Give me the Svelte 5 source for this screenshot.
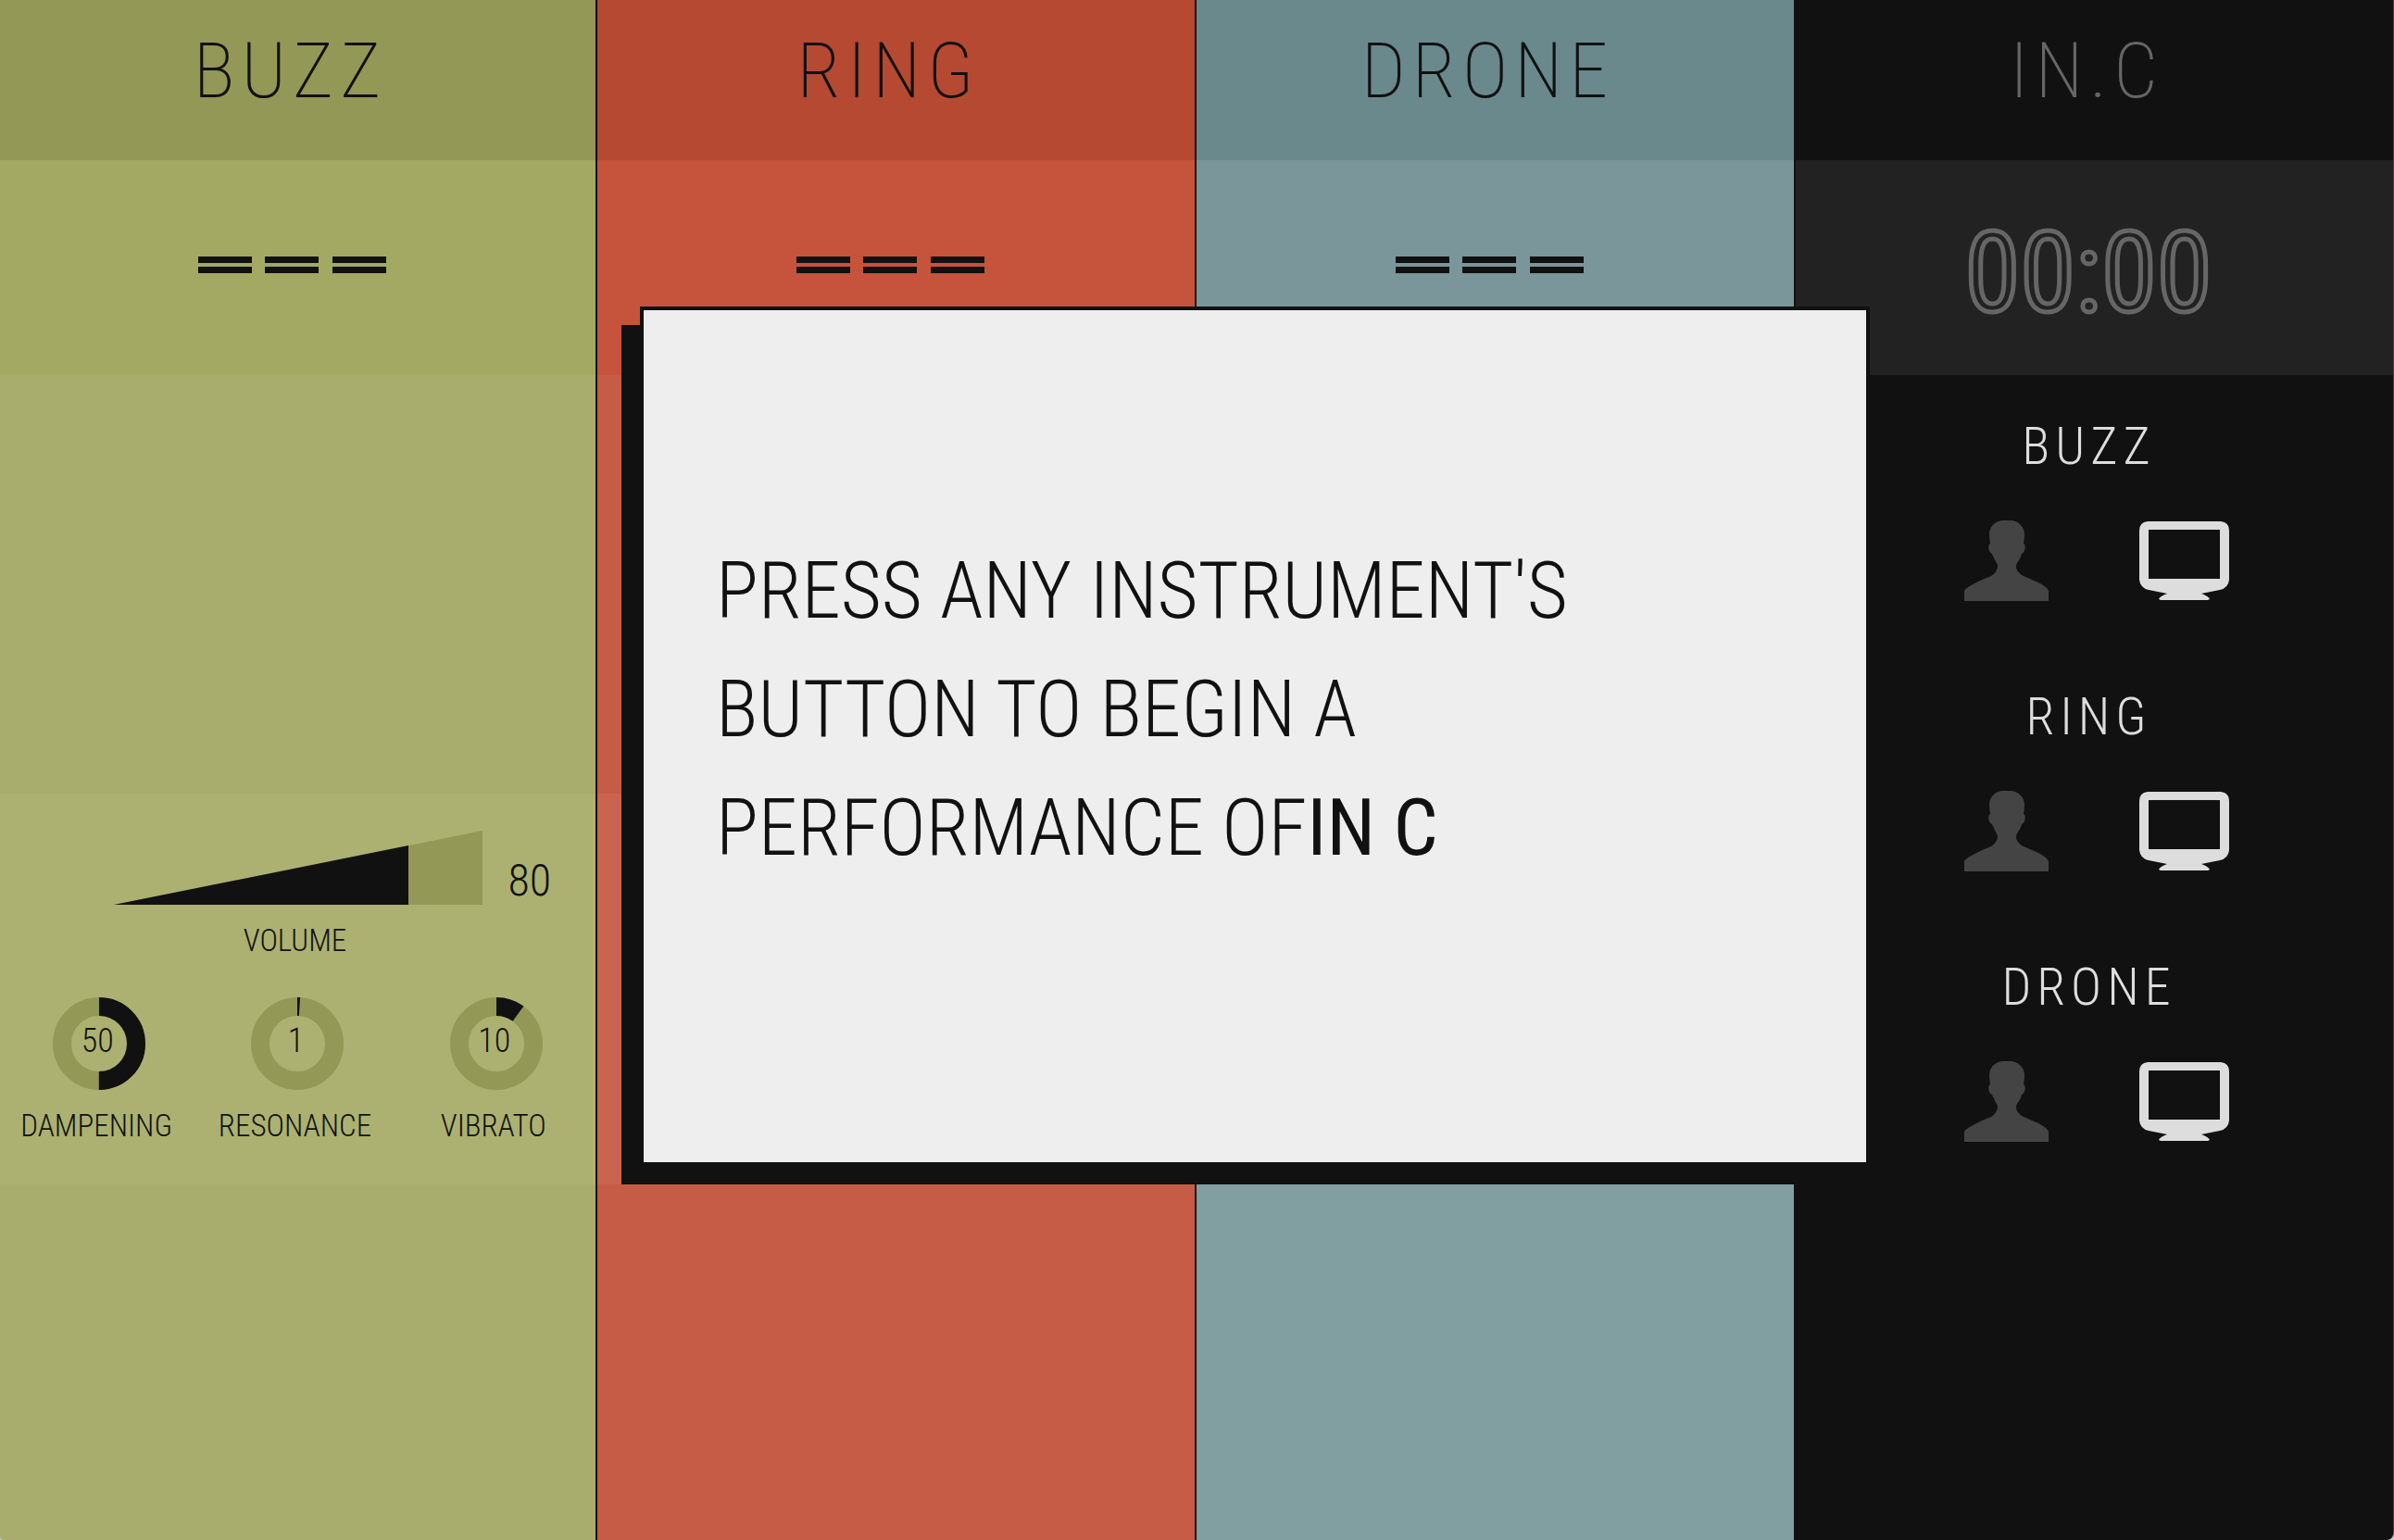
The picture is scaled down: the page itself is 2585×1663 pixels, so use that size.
<script>
  const instruments = [
    { name: 'BUZZ', tone: 'green', open: true },
    { name: 'RING', tone: 'red', open: false },
    { name: 'DRONE', tone: 'teal', open: false }
  ];
  const dials = [
    { label: 'DAMPENING', value: 50 },
    { label: 'RESONANCE', value: 1 },
    { label: 'VIBRATO', value: 10 }
  ];
  const volume = 80;
  const ring = 2 * Math.PI * 40;
</script>

<main class="board">
  {#each instruments as item}
    <section class="column {item.tone}">
      <header class="head"><h1>{item.name}</h1></header>
      <div class="band">
        <svg class="pattern" viewBox="0 0 203 18" role="img" aria-label="Pattern not started">
          <path d="M0 0h58v7H0zM72 0h58v7H72zM145 0h58v7h-58zM0 11h58v7H0zM72 11h58v7H72zM145 11h58v7h-58z" />
        </svg>
      </div>
      <div class="stage"></div>
      <div class="controls">
        {#if item.open}
          <div class="volume">
            <div class="wedge">
              <svg viewBox="0 0 398 80" aria-hidden="true">
                <path class="track" d="M0 80L398 0V80Z" />
                <path d="M0 80L318 16V80Z" />
              </svg>
              <input id="{item.name}-volume" type="range" min="0" max="100" value={volume} />
            </div>
            <output class="level" for="{item.name}-volume">{volume}</output>
          </div>
          <label class="caption" for="{item.name}-volume">VOLUME</label>
          <div class="dials">
            {#each dials as dial}
              <label class="dial">
                <span class="knob">
                  <svg viewBox="0 0 100 100" aria-hidden="true">
                    <circle class="groove" cx="50" cy="50" r="40" />
                    <circle class="amount" cx="50" cy="50" r="40" stroke-dasharray="{ring * dial.value / 100} {ring}" />
                  </svg>
                  <span class="number">{dial.value}</span>
                  <input type="range" min="0" max="100" value={dial.value} />
                </span>
                <span class="caption">{dial.label}</span>
              </label>
            {/each}
          </div>
        {/if}
      </div>
    </section>
  {/each}

  <section class="column dark">
    <header class="head"><h1>IN.C</h1></header>
    <div class="band"><time class="clock">00:00</time></div>
    {#each instruments as item}
      <div class="player">
        <h2>{item.name}</h2>
        <div class="modes">
          <button class="person" aria-label="{item.name} played by a person">
            <svg viewBox="0 0 91 87">
              <path d="M0 87V76C2 72 16 65 29 60C34 57 36 52 36 49C36 46 33 44 32 40Q30 37 30 36C26 35 25 26 28 25Q27 19 27 14C28 5 35 0 42 0H50C57 0 65 6 65 15Q65 20 64 25C67 26 66 35 62 36Q61 40 59 43C57 46 56 47 56 50C56 54 60 58 64 60C75 65 88 69 91 76V87Z" />
            </svg>
          </button>
          <button class="machine" aria-label="{item.name} played by the computer">
            <svg viewBox="0 0 97 87">
              <path fill-rule="evenodd" d="M9 1H88Q97 2 97 11V64Q96 73 87 75L67 79Q75 82 76 85L74 86H23L21 85Q22 82 30 79L10 75Q1 73 0 64V11Q0 2 9 1ZM10 10V63H87V10Z" />
            </svg>
          </button>
        </div>
      </div>
    {/each}
  </section>
</main>

<div class="notice" role="dialog" aria-label="Start a performance">
  <p>PRESS ANY INSTRUMENT'S<br />BUTTON TO BEGIN A<br />PERFORMANCE OF<b>IN C</b></p>
</div>

<style>
  :global(body) {
    background: #ccc;
    font-family: 'Roboto Condensed', 'Liberation Sans Narrow', Roboto, sans-serif;
    font-weight: 300;
  }
  .board {
    display: grid;
    grid-template-columns: 645fr 647fr 647fr 646fr;
    min-height: 100vh;
    color: #111;
    fill: #111;
  }
  h1, h2, p {
    margin: 0;
    font-weight: 300;
  }
  .column {
    display: flex;
    flex-direction: column;
    box-sizing: border-box;
    min-width: 0;
    border-right: 2px solid #111;
    background: var(--main);
  }
  .green { --head: #939857; --band: #a3a963; --main: #a8ad6d; --panel: #acb172; border-bottom-left-radius: 4px; }
  .red { --head: #b54932; --band: #c6533c; --main: #c65c45; --panel: #cb644e; }
  .teal { --head: #6a898c; --band: #7a969a; --main: #819ea0; --panel: #88a4a6; }
  .dark {
    --head: #111;
    --band: #222;
    --main: #111;
    color: #666;
    border-right: 1px solid #444;
    border-bottom-right-radius: 8px;
  }
  .head {
    display: flex;
    justify-content: center;
    height: 173px;
    background: var(--head);
  }
  h1 {
    padding-right: 16px;
    font-size: 84px;
    font-weight: 250;
    line-height: 154px;
    letter-spacing: 7px;
  }
  .band {
    display: flex;
    align-items: center;
    justify-content: center;
    box-sizing: border-box;
    height: 232px;
    padding: 0 13px 6px 0;
    background: var(--band);
  }
  .pattern {
    width: 203px;
    height: 18px;
  }
  .clock {
    padding-top: 18px;
    font-size: 121px;
    font-weight: 400;
    line-height: 1;
    color: transparent;
    -webkit-text-stroke: 5px #666;
  }
  .stage {
    height: 452px;
  }
  .controls {
    box-sizing: border-box;
    height: 422px;
    padding-top: 40px;
    background: var(--panel);
    text-align: center;
  }
  .volume {
    display: grid;
    grid-template-columns: 1fr 398px 1fr;
    align-items: end;
  }
  .wedge {
    grid-column: 2;
    position: relative;
    height: 80px;
  }
  .wedge svg {
    width: 398px;
    height: 80px;
  }
  .track {
    fill: var(--head);
  }
  input {
    position: absolute;
    inset: 0;
    width: 100%;
    height: 100%;
    margin: 0;
    opacity: 0;
  }
  .level {
    padding-left: 28px;
    text-align: left;
    font-size: 48px;
    line-height: 52px;
  }
  .caption {
    display: block;
    padding-right: 6px;
    font-size: 33px;
    line-height: 42px;
  }
  .volume + .caption {
    padding-top: 18px;
  }
  .dials {
    display: grid;
    grid-template-columns: repeat(3, 1fr);
    padding-top: 40px;
  }
  .dial {
    display: flex;
    flex-direction: column;
    align-items: center;
    gap: 18px;
  }
  .knob {
    display: grid;
    place-items: center;
    position: relative;
    width: 100px;
    height: 100px;
  }
  .knob svg, .number {
    grid-area: 1 / 1;
  }
  .knob svg {
    width: 100px;
    height: 100px;
  }
  .number {
    padding: 0 4px 6px 0;
    font-size: 36px;
    line-height: 40px;
  }
  circle {
    fill: none;
    stroke-width: 20px;
  }
  .groove {
    stroke: var(--head);
  }
  .amount {
    stroke: #111;
    transform: rotate(-90deg);
    transform-origin: center;
  }
  .player {
    height: 292px;
    text-align: center;
    color: #ddd;
  }
  h2 {
    padding: 47px 12px 0 0;
    font-size: 56px;
    line-height: 60px;
    letter-spacing: 6px;
  }
  .modes {
    display: flex;
    justify-content: center;
    gap: 98px;
    padding: 50px 0 0 4px;
  }
  button {
    padding: 0;
    border: 0;
    background: none;
  }
  button svg {
    display: block;
    width: 100%;
    height: 87px;
  }
  .person {
    width: 91px;
    fill: #444;
  }
  .machine {
    width: 97px;
    fill: #ddd;
  }
  .notice {
    position: absolute;
    top: 331px;
    left: 691px;
    box-sizing: border-box;
    width: 1328px;
    max-width: 60vw;
    padding: 239px 78px 297px;
    border: 4px solid #111;
    box-shadow: -20px 20px #111;
    background: #eee;
    color: #111;
    font-size: 85px;
    line-height: 128px;
    white-space: nowrap;
  }
  b {
    font-weight: 400;
  }
</style>
